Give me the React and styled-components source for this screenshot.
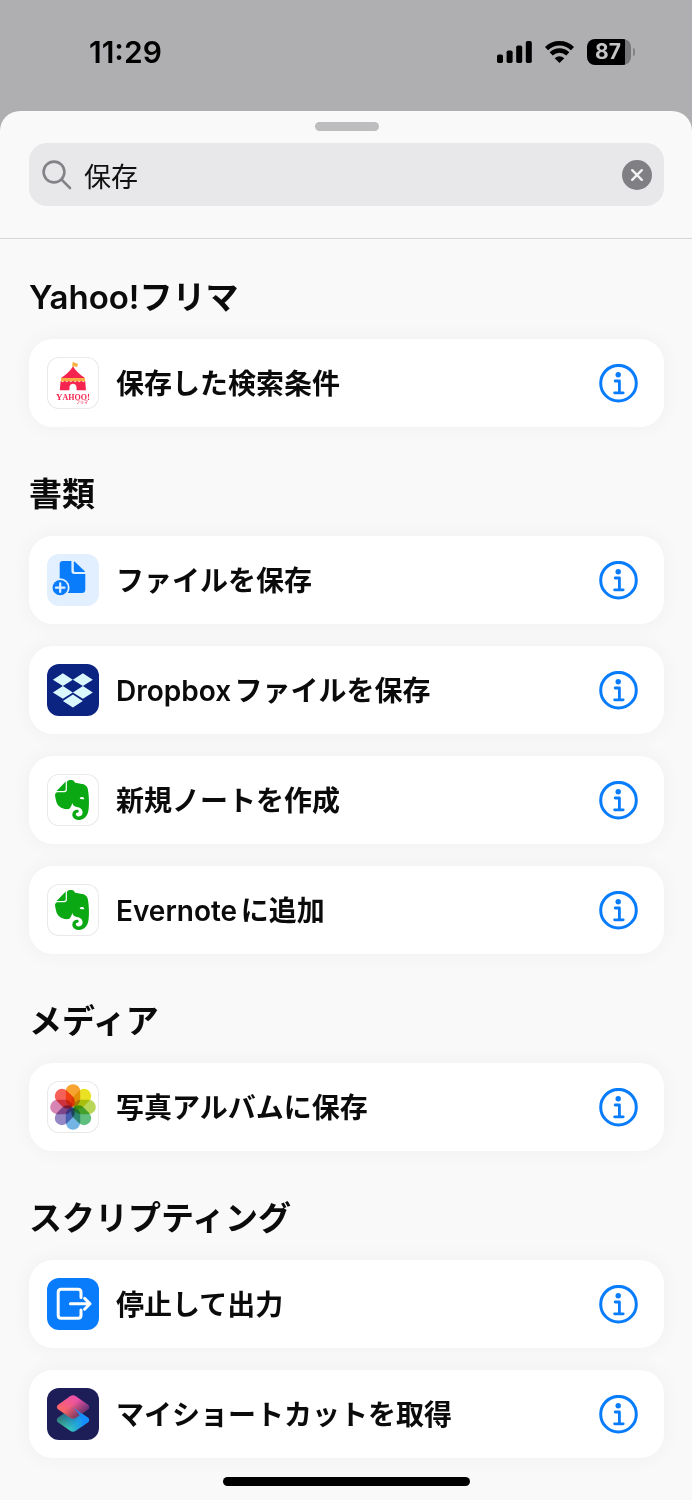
import React, { useState } from "react";
import styled, { createGlobalStyle } from "styled-components";
import { SiEvernote } from "react-icons/si";

const GlobalStyle = createGlobalStyle`
  *, *::before, *::after { box-sizing: border-box; }
  body {
    margin: 0;
    background: #afafb1;
    color: #0b0b0c;
    font-family: Inter, "Noto Sans CJK JP", sans-serif;
    text-autospace: normal;
  }
  button { font: inherit; color: inherit; border: 0; padding: 0; background: none; cursor: pointer; }
`;

const Screen = styled.div`
  min-height: 100vh;
  display: flex;
  flex-direction: column;
`;

const StatusBar = styled.header`
  height: 111px;
  padding: 32px 57px 0 89px;
  display: flex;
  align-items: flex-start;
  justify-content: space-between;
`;

const Clock = styled.time`
  font-size: 30px;
  line-height: 40px;
  font-weight: 600;
  color: #000;
`;

const StatusIcons = styled.div`
  height: 40px;
  display: flex;
  align-items: center;
  gap: 13px;
`;

const Battery = styled.div`
  display: flex;
  align-items: center;
  gap: 2px;
`;

const BatteryLevel = styled.span`
  width: 44px;
  height: 26px;
  padding-right: 2px;
  border-radius: 8px;
  background: linear-gradient(to right, #000 38px, #77777a 38px);
  color: #c4c4c6;
  font-size: 21px;
  line-height: 26px;
  font-weight: 700;
  text-align: center;
`;

const BatteryTip = styled.span`
  width: 2px;
  height: 8px;
  border-radius: 0 2px 2px 0;
  background: #838385;
`;

const Sheet = styled.main`
  flex: 1;
  display: flex;
  flex-direction: column;
  border-radius: 20px 20px 0 0;
  background: #f9f9f9;
`;

const SheetTop = styled.div`
  padding: 11px 28px 32px 29px;
  border-bottom: 1px solid #d6d6d8;
  display: flex;
  flex-direction: column;
  gap: 12px;
`;

const Grabber = styled.div`
  align-self: center;
  width: 64px;
  height: 9px;
  border-radius: 5px;
  background: #bdbdbf;
`;

const SearchField = styled.label`
  height: 63px;
  padding: 0 12px 0 13px;
  border-radius: 18px;
  background: #e8e8ea;
  display: flex;
  align-items: center;
  gap: 12px;
`;

const SearchInput = styled.input`
  flex: 1;
  min-width: 0;
  height: 42px;
  padding: 2px 0 0;
  border: 0;
  outline: 0;
  background: none;
  color: #111;
  font-family: inherit;
  font-size: 27px;
  line-height: 40px;
`;

const ClearButton = styled.button`
  width: 30px;
  height: 30px;
  border-radius: 50%;
  background: #7f7f84;
  display: grid;
  place-items: center;
`;

const Results = styled.div`
  padding: 38px 28px 0 29px;
  display: flex;
  flex-direction: column;
  gap: 47px;
`;

const Heading = styled.h2`
  margin: 0 0 22px;
  font-size: 33px;
  line-height: 40px;
  font-weight: 600;
`;

const CardList = styled.ul`
  margin: 0;
  padding: 0;
  list-style: none;
  display: flex;
  flex-direction: column;
  gap: 22px;
`;

const Card = styled.li`
  height: 88px;
  padding: 0 26px 0 18px;
  border-radius: 24px;
  background: #fff;
  box-shadow: 0 0 22px rgba(0, 0, 0, 0.045);
  display: flex;
  align-items: center;
`;

const ActionButton = styled.button`
  flex: 1;
  min-width: 0;
  display: flex;
  align-items: center;
  gap: 17px;
  text-align: left;
`;

const ActionName = styled.span`
  padding-top: 2px;
  font-size: 28px;
  line-height: 40px;
  font-weight: 600;
`;

const AppIcon = styled.span`
  flex: none;
  width: 52px;
  height: 52px;
  border-radius: 12px;
  background: ${(p) => p.$fill || "#fff"};
  box-shadow: ${(p) => (p.$fill ? "none" : "inset 0 0 0 1px #e9e9ea")};
  display: grid;
  place-items: center;
`;

const InfoButton = styled.button`
  width: 39px;
  height: 39px;
  color: #087cfb;
`;

const HomeIndicator = styled.div`
  align-self: center;
  width: 247px;
  height: 9px;
  margin: 19px 0 14px;
  border-radius: 5px;
  background: #000;
`;

const Art = ({ children }) => (
  <svg width="52" height="52" viewBox="0 0 52 52" fill="none" aria-hidden="true" display="block">
    {children}
  </svg>
);

const FleaMarketArt = () => (
  <Art>
    <path d="M26 12V5.5" stroke="#f5a623" strokeWidth="1" />
    <path d="M26 5l5 2-1 3-4-1z" fill="#f7b03c" />
    <path d="M26 9.6c3 4.4 7 8.4 12 11.4v2H14v-2c5-3 9-7 12-11.4z" fill="#f5254f" />
    <path d="M14 21h24v3.4H14z" fill="#f9b040" />
    <path d="M13.6 24l2.2 1.2 2-1.4 2 1.4 2-1.4 2 1.4 2.2-1.4 2.2 1.4 2-1.4 2 1.4 2-1.4 2 1.4 2-1.2.8 9.2h-9.4v-2.2c0-5.6-7.2-5.6-7.2 0V33.2h-9.6z" fill="#f5254f" />
    <text x="9" y="43" fontFamily="Liberation Serif, serif" fontWeight="700" fontSize="9" fill="#f5254f">
      Y<tspan fontSize="8">AHOO</tspan>!
    </text>
    <text x="29" y="47" fontFamily="Noto Sans CJK JP, sans-serif" fontWeight="700" fontSize="4" fill="#f5557a">フリマ</text>
  </Art>
);

const SaveFileArt = () => (
  <Art>
    <path d="M16 7H24.4V17.6Q24.4 20 26.8 20H38.3V35.5Q38.3 39 34.8 39H16.2Q12.7 39 12.7 35.5V10.3Q12.7 7 16 7z" fill="#087cfb" />
    <path d="M26.8 8.6Q26.8 6.8 28.1 8L37.8 17.2Q38.6 18 37.4 18H28.4Q26.8 18 26.8 16.4z" fill="#087cfb" />
    <circle cx="13.2" cy="33.7" r="9.4" fill="#e2effe" />
    <circle cx="13.2" cy="33.7" r="7.6" fill="#087cfb" />
    <path d="M13.2 29.4v8.6M8.9 33.7h8.6" stroke="#e2effe" strokeWidth="2.2" strokeLinecap="round" />
  </Art>
);

const DropboxArt = () => (
  <Art>
    <path
      d="M15.9 9.3l9.9 6.4-9.9 6.3-10-6.3zM35.9 9.3l9.9 6.4-9.9 6.3-10-6.3zM15.9 22l9.9 6.4-9.9 6.3-10-6.3zM35.9 22l9.9 6.4-9.9 6.3-10-6.3zM25.9 30.6l9.9 6.4-9.9 6.4-10-6.4z"
      fill="#d9f7fd"
    />
  </Art>
);

const petals = ["#f79a1d", "#e8de12", "#b2d34a", "#52b874", "#68aee2", "#8c7cc0", "#d37bae", "#f4524a"];

const PhotosArt = () => (
  <Art>
    {petals.map((color, i) => (
      <rect
        key={color}
        x="18.8"
        y="3.2"
        width="14.4"
        height="22.4"
        rx="7.2"
        fill={color}
        fillOpacity="0.92"
        transform={`rotate(${i * 45} 26 26)`}
        style={{ mixBlendMode: "multiply" }}
      />
    ))}
  </Art>
);

const ExitArt = () => (
  <Art>
    <path
      d="M34 19.5V14.2Q34 11.2 31 11.2H14.2Q11.2 11.2 11.2 14.2V37.3Q11.2 40.3 14.2 40.3H31Q34 40.3 34 37.3V32M23.4 25.8H43M37.6 20.4L43 25.8L37.6 31.2"
      stroke="#fff"
      strokeWidth="3"
      strokeLinecap="round"
      strokeLinejoin="round"
    />
  </Art>
);

const layer = "M23.1 1.2Q26 -.7 28.9 1.2L40.6 9.4Q43.8 12 40.6 14.6L28.9 22.8Q26 24.7 23.1 22.8L11.4 14.6Q8.2 12 11.4 9.4z";

const ShortcutsArt = () => (
  <Art>
    <defs>
      <linearGradient id="lower" x1="40" y1="8" x2="14" y2="20" gradientUnits="userSpaceOnUse">
        <stop offset="0" stopColor="#168dff" />
        <stop offset="0.5" stopColor="#25a8d8" />
        <stop offset="1" stopColor="#48dfa0" />
      </linearGradient>
      <linearGradient id="upper" x1="30" y1="0" x2="16" y2="22" gradientUnits="userSpaceOnUse">
        <stop offset="0" stopColor="#e84fb4" />
        <stop offset="1" stopColor="#ff6a55" />
      </linearGradient>
      <linearGradient id="lowerShade" x1="12" y1="6" x2="24" y2="20" gradientUnits="userSpaceOnUse">
        <stop offset="0" stopColor="#1d1e58" stopOpacity="0.6" />
        <stop offset="1" stopColor="#1d1e58" stopOpacity="0" />
      </linearGradient>
      <linearGradient id="upperShade" x1="40" y1="17" x2="30" y2="5" gradientUnits="userSpaceOnUse">
        <stop offset="0" stopColor="#1d1e58" stopOpacity="0.7" />
        <stop offset="1" stopColor="#1d1e58" stopOpacity="0" />
      </linearGradient>
    </defs>
    <g transform="translate(0 20)">
      <path d={layer} fill="url(#lower)" />
      <path d={layer} fill="url(#lowerShade)" />
    </g>
    <g transform="translate(0 7)">
      <path d={layer} fill="url(#upper)" />
      <path d={layer} fill="url(#upperShade)" />
    </g>
    <path d="M26 19.5L40.6 29.4Q43.8 32 40.6 34.6L34 39.2Q38 31 26 19.5z" fill="#168dff" fillOpacity="0.85" />
  </Art>
);

const EvernoteArt = () => (
  <Art>
    <SiEvernote x="5" y="6" size={40} color="#0aa914" />
  </Art>
);

const InfoGlyph = () => (
  <svg width="39" height="39" viewBox="0 0 39 39" fill="none" stroke="currentColor" aria-hidden="true" display="block">
    <circle cx="19.5" cy="19.2" r="17.8" strokeWidth="3" />
    <circle cx="19.2" cy="10.8" r="2.7" fill="currentColor" stroke="none" />
    <path d="M16.2 17h4.2v11.4M15.6 28.8h8.6" strokeWidth="2.8" strokeLinecap="round" strokeLinejoin="round" />
  </svg>
);

const SignalGlyph = () => (
  <svg width="35" height="24" viewBox="0 0 35 24" aria-label="電波" role="img">
    <rect x="0" y="14.5" width="6" height="8.5" rx="1.8" />
    <rect x="9.6" y="10.5" width="6" height="12.5" rx="1.8" />
    <rect x="19.2" y="5.5" width="6" height="17.5" rx="1.8" />
    <rect x="28.8" y="1" width="6" height="22" rx="1.8" />
  </svg>
);

const WifiGlyph = () => (
  <svg width="29" height="24" viewBox="0 0 29 24" fill="none" stroke="#000" strokeWidth="4.4" aria-label="Wi-Fi" role="img">
    <path d="M1.5 8.6C8.8 1.4 20.2 1.4 27.5 8.6" />
    <path d="M6.2 13.8C10.9 9.3 18.1 9.3 22.8 13.8" />
    <path d="M14.5 23L9.7 18.2Q14.5 14.2 19.3 18.2z" fill="#000" stroke="none" />
  </svg>
);

const SearchGlyph = () => (
  <svg width="30" height="30" viewBox="0 0 30 30" fill="none" stroke="#828287" strokeWidth="2.6" strokeLinecap="round" aria-hidden="true">
    <circle cx="12" cy="12" r="10.4" />
    <path d="M19.6 19.6L28 28" />
  </svg>
);

const ClearGlyph = () => (
  <svg width="12" height="12" viewBox="0 0 12 12" stroke="#f2f2f3" strokeWidth="2.4" strokeLinecap="round" aria-hidden="true">
    <path d="M1.2 1.2l9.6 9.6M10.8 1.2l-9.6 9.6" />
  </svg>
);

const sections = [
  { title: "Yahoo!フリマ", actions: [{ name: "保存した検索条件", Icon: FleaMarketArt }] },
  {
    title: "書類",
    actions: [
      { name: "ファイルを保存", Icon: SaveFileArt, fill: "#e2effe" },
      { name: "Dropboxファイルを保存", Icon: DropboxArt, fill: "#0c2481" },
      { name: "新規ノートを作成", Icon: EvernoteArt },
      { name: "Evernoteに追加", Icon: EvernoteArt },
    ],
  },
  { title: "メディア", actions: [{ name: "写真アルバムに保存", Icon: PhotosArt }] },
  {
    title: "スクリプティング",
    actions: [
      { name: "停止して出力", Icon: ExitArt, fill: "#087cfb" },
      { name: "マイショートカットを取得", Icon: ShortcutsArt, fill: "#1d1e58" },
    ],
  },
];

export default function App() {
  const [query, setQuery] = useState("保存");

  return (
    <Screen>
      <GlobalStyle />
      <StatusBar>
        <Clock>11:29</Clock>
        <StatusIcons>
          <SignalGlyph />
          <WifiGlyph />
          <Battery>
            <BatteryLevel>87</BatteryLevel>
            <BatteryTip />
          </Battery>
        </StatusIcons>
      </StatusBar>
      <Sheet>
        <SheetTop>
          <Grabber />
          <SearchField>
            <SearchGlyph />
            <SearchInput type="text" aria-label="検索" value={query} onChange={(e) => setQuery(e.target.value)} />
            <ClearButton type="button" aria-label="消去" onClick={() => setQuery("")}>
              <ClearGlyph />
            </ClearButton>
          </SearchField>
        </SheetTop>
        <Results>
          {sections.map(({ title, actions }) => (
            <section key={title}>
              <Heading>{title}</Heading>
              <CardList>
                {actions.map(({ name, Icon, fill }) => (
                  <Card key={name}>
                    <ActionButton type="button">
                      <AppIcon $fill={fill}>
                        <Icon />
                      </AppIcon>
                      <ActionName>{name}</ActionName>
                    </ActionButton>
                    <InfoButton type="button" aria-label={`${name}の情報`}>
                      <InfoGlyph />
                    </InfoButton>
                  </Card>
                ))}
              </CardList>
            </section>
          ))}
        </Results>
        <HomeIndicator />
      </Sheet>
    </Screen>
  );
}
